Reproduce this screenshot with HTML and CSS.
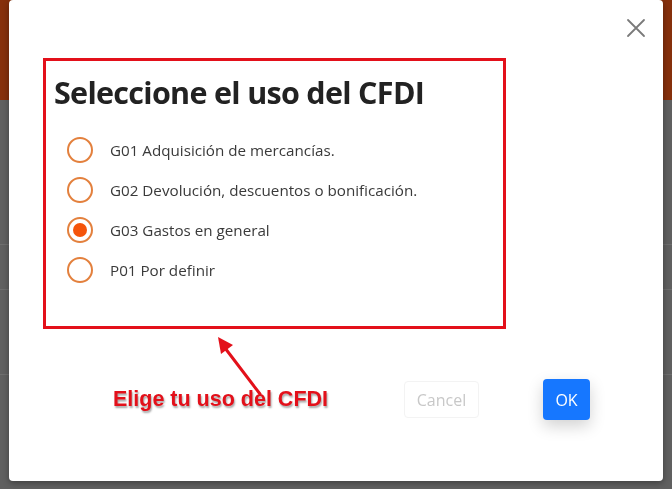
FILE: index.html
```html
<!DOCTYPE html>
<html lang="es">
<head>
<meta charset="utf-8">
<link rel="stylesheet" href="styles.css">
</head>
<body>
<div class="page">
  <div class="page-header"></div>
  <div class="page-row r1"></div>
  <div class="page-row r2"></div>
  <div class="page-row r3"></div>
</div>

<div class="modal">
  <button class="close" aria-label="Cerrar">
    <svg width="20" height="20" viewBox="0 0 20 20"><path d="M2 2 L18 18 M18 2 L2 18" stroke="#7a7a7a" stroke-width="1.8" fill="none" stroke-linecap="round"/></svg>
  </button>
  <section class="choice-box">
    <h1 class="title">Seleccione el uso del CFDI</h1>
    <ul class="options">
      <li class="option"><span class="radio"></span><span class="label">G01 Adquisición de mercancías.</span></li>
      <li class="option"><span class="radio"></span><span class="label">G02 Devolución, descuentos o bonificación.</span></li>
      <li class="option"><span class="radio checked"></span><span class="label">G03 Gastos en general</span></li>
      <li class="option"><span class="radio"></span><span class="label">P01 Por definir</span></li>
    </ul>
  </section>
  <div class="footer">
    <div class="annotation">Elige tu uso del CFDI</div>
    <button class="btn cancel">Cancel</button>
    <button class="btn ok">OK</button>
  </div>
  <svg class="arrow" width="60" height="70" viewBox="0 0 60 70">
    <path d="M47 62 L12 16" stroke="#e3101a" stroke-width="3" fill="none" stroke-linecap="round"/>
    <path d="M5 5 L20 13 L8 22 Z" fill="#e3101a"/>
  </svg>
</div>
</body>
</html>
```
FILE: styles.css
```css
* { box-sizing: border-box; }
html, body { margin: 0; padding: 0; }
body {
  width: 672px;
  height: 489px;
  overflow: hidden;
  background: #606060;
  font-family: "Open Sans", "Liberation Sans", sans-serif;
}
.page { width: 672px; height: 489px; }
.page-header { height: 100px; background: #86300c; }
.page-row { border-bottom: 1px solid #6e6e6e; }
.r1 { height: 145px; }
.r2 { height: 45px; }
.r3 { height: 85px; }

.modal {
  position: fixed;
  left: 9px;
  top: 0;
  width: 654px;
  height: 481px;
  background: #fff;
  border-radius: 4px;
  box-shadow: 0 2px 6px rgba(0,0,0,0.35);
}
.close {
  position: absolute;
  right: 17px;
  top: 18px;
  width: 20px;
  height: 20px;
  padding: 0;
  border: 0;
  background: none;
}
.choice-box {
  margin: 58px 0 0 34px;
  width: 463px;
  height: 271px;
  border: 3px solid #e3101a;
  padding: 13px 0 0 8px;
}
.title {
  margin: 0;
  font-size: 30.5px;
  font-weight: 700;
  letter-spacing: -0.7px;
  color: #222;
  line-height: 36px;
}
.options {
  list-style: none;
  margin: 20px 0 0 13px;
  padding: 0;
}
.option {
  display: flex;
  align-items: center;
  height: 40px;
}
.radio {
  width: 26px;
  height: 26px;
  border: 2px solid #e3803d;
  border-radius: 50%;
  display: flex;
  align-items: center;
  justify-content: center;
  flex: none;
}
.radio.checked::after {
  content: "";
  width: 14px;
  height: 14px;
  border-radius: 50%;
  background: #f5540a;
}
.label {
  margin-left: 17px;
  font-size: 15.2px;
  color: #3a3a3a;
}
.footer {
  display: flex;
  align-items: center;
  margin: 50px 0 0 0;
  height: 41px;
}
.annotation {
  margin-left: 104px;
  width: 291px;
  font-family: "Liberation Sans", Arial, sans-serif;
  font-weight: 700;
  font-size: 21.5px;
  color: #e3101a;
  text-shadow: 1px 2px 2px rgba(0,0,0,0.35);
}
.btn {
  font-family: "Open Sans", "Liberation Sans", sans-serif;
  font-size: 16px;
  border-radius: 4px;
  cursor: pointer;
}
.cancel {
  width: 75px;
  height: 37px;
  background: #fff;
  border: 1px solid #f3f3f3;
  color: #c8c8c8;
}
.ok {
  margin-left: 64px;
  width: 47px;
  height: 41px;
  border: 0;
  background: #1677ff;
  color: #fff;
  box-shadow: 0 6px 16px rgba(0,0,0,0.18);
}
.arrow {
  position: absolute;
  left: 204px;
  top: 332px;
}
```
